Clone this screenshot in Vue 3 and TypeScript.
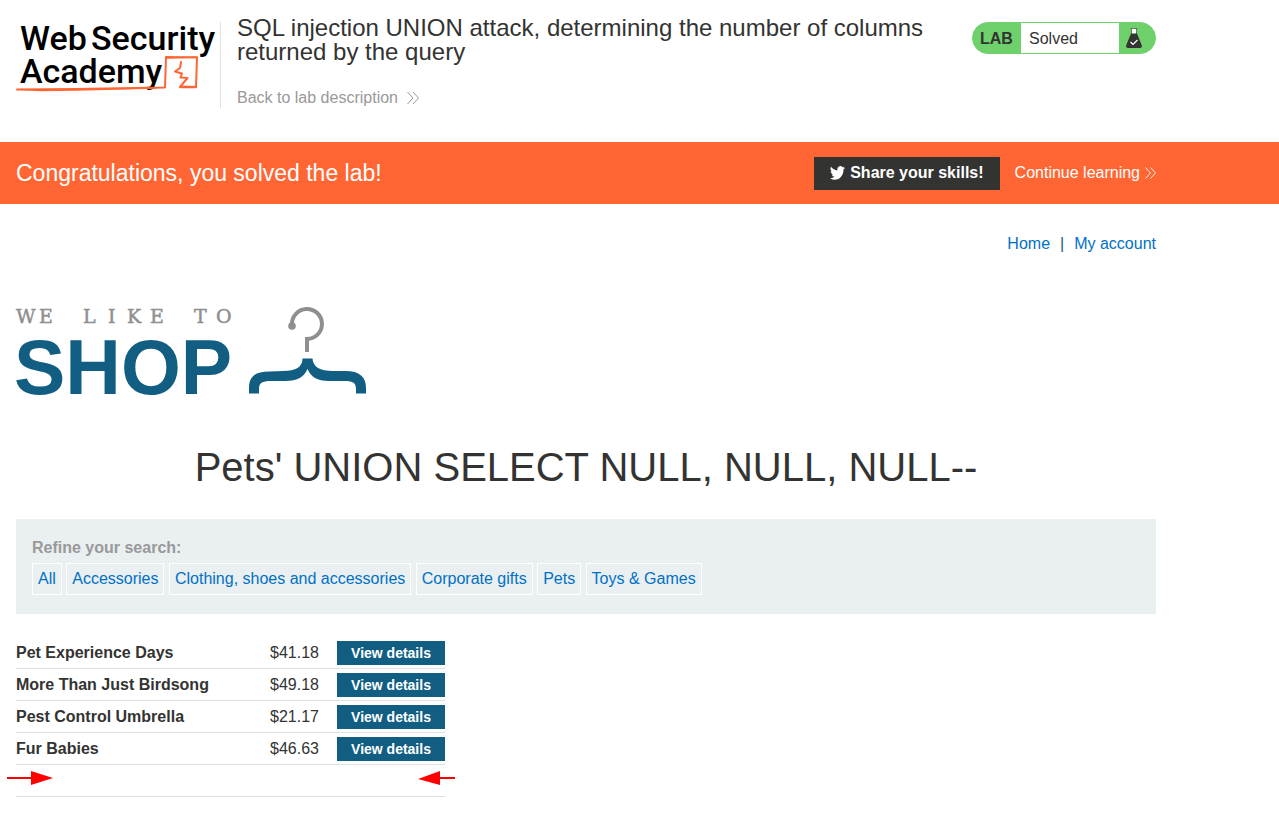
<script setup lang="ts">
interface Product {
  name: string
  price: string
}

const categories: string[] = [
  'All',
  'Accessories',
  'Clothing, shoes and accessories',
  'Corporate gifts',
  'Pets',
  'Toys & Games',
]

const products: Product[] = [
  { name: 'Pet Experience Days', price: '$41.18' },
  { name: 'More Than Just Birdsong', price: '$49.18' },
  { name: 'Pest Control Umbrella', price: '$21.17' },
  { name: 'Fur Babies', price: '$46.63' },
]
</script>

<template>
  <div class="page">
    <header class="container lab-header">
      <svg class="academy-logo" viewBox="0 0 200 72" width="200" height="72" role="img" aria-label="Web Security Academy">
        <g class="academy-text">
          <text x="4" y="28">Web</text>
          <text x="75" y="28">Security</text>
          <text x="4" y="61">Academy</text>
        </g>
        <g fill="none" stroke="#ff6633" stroke-linejoin="round" stroke-linecap="round">
          <path d="M1 67.500L60 67L149 65.500L150 35L181 35.500L180 65L165 64.500" stroke-width="2" />
          <path d="M5 67.500L25 68.500L60 68L140 66M150 36L181 35M180 65.500L164 65.500" stroke-width="1.500" />
          <path d="M165 40L164 46L159 49.500L166 51.500L164.500 55.500L171.500 56L164 65" stroke-width="2" />
        </g>
      </svg>
      <div class="title-block">
        <h2>SQL injection UNION attack, determining the number of columns returned by the query</h2>
        <a class="back-link" href="#">
          Back to lab description
          <svg width="12" height="12" viewBox="0 0 12 12" fill="none" stroke="currentColor" aria-hidden="true">
            <path d="M.5 0L6 6L.5 12M6 0L11.500 6L6 12" />
          </svg>
        </a>
      </div>
      <div class="status">
        <span class="status-tag">LAB</span>
        <span class="status-text">Solved</span>
        <span class="status-icon">
          <svg width="16" height="20" viewBox="0 0 16 20" aria-hidden="true">
            <path d="M5.500.5H10.500V6H5.500Z" fill="#fff" />
            <path d="M4.500.5H11.500M5.500 1V6M10.500 1V6" fill="none" stroke="#333332" stroke-width=".6" />
            <path d="M5 5.500H11L15.700 17Q16.500 20 14 20H2Q-.5 20 .3 17Z" fill="#333332" />
            <path d="M4.500 14L7 16.500L11.500 12" fill="none" stroke="#fff" stroke-width="1.200" />
          </svg>
        </span>
      </div>
    </header>

    <section class="banner">
      <div class="container banner-inner">
        <h3>Congratulations, you solved the lab!</h3>
        <button type="button" class="share">
          <svg width="15" height="14" viewBox="0 0 24 20" preserveAspectRatio="none" aria-hidden="true">
            <path d="M23.950 2.570a10 10 0 0 1-2.820.77 4.960 4.960 0 0 0 2.160-2.720c-.95.55-2 .95-3.130 1.190a4.920 4.920 0 0 0-8.380 4.480A13.980 13.980 0 0 1 1.640 1.160a4.920 4.920 0 0 0 1.520 6.570 4.900 4.900 0 0 1-2.230-.61v.06a4.920 4.920 0 0 0 3.950 4.830 5 5 0 0 1-2.210.08 4.940 4.940 0 0 0 4.600 3.420A9.870 9.870 0 0 1 0 17.540a13.990 13.990 0 0 0 7.560 2.210c9.050 0 14-7.500 14-13.980 0-.21 0-.42-.02-.63a9.940 9.940 0 0 0 2.410-2.570z" fill="#fff" />
          </svg>
          Share your skills!
        </button>
        <a class="continue" href="#">
          Continue learning
          <svg width="11" height="12" viewBox="0 0 12 12" fill="none" stroke="currentColor" aria-hidden="true">
            <path d="M.5 0L6 6L.5 12M6 0L11.500 6L6 12" />
          </svg>
        </a>
      </div>
    </section>

    <main class="container">
      <nav class="account-nav">
        <a href="#">Home</a>
        <span>|</span>
        <a href="#">My account</a>
      </nav>

      <svg class="shop-logo" viewBox="0 0 350 88" width="350" height="88" role="img" aria-label="We like to shop">
        <text class="tagline" y="16" x="0 23">WE</text>
        <text class="tagline" y="16" x="67 92 111 134">LIKE</text>
        <text class="tagline" y="16" x="178 200">TO</text>
        <text class="shop-word" x="-2" y="87">SHOP</text>
        <path d="M276 18A15 15 0 1 1 291 32V45" fill="none" stroke="#8f8f8f" stroke-width="4" />
        <circle cx="276" cy="19" r="3.800" fill="#8f8f8f" />
        <path d="M286.500 51.500H296.500C297 60 304 64 317 64H329C344 64 350 70 350 81V86.500H340V82C340 76 337 74 329 74H313C301 74 295 70 291.500 62C288 70 282 74 269 74L255 74C246 74 243 76 243 82V86.500H233V81C233 69 240 64.500 253 64.500L267 64C280 64 286.500 60 286.500 51.500Z" fill="#115e82" />
      </svg>

      <h1>Pets' UNION SELECT NULL, NULL, NULL--</h1>

      <section class="filters">
        <p>Refine your search:</p>
        <template v-for="category in categories" :key="category"><a href="#">{{ category }}</a>{{ ' ' }}</template>
      </section>

      <div class="results">
        <table>
          <tbody>
            <tr v-for="product in products" :key="product.name">
              <th scope="row">{{ product.name }}</th>
              <td class="price">{{ product.price }}</td>
              <td class="action"><a href="#">View details</a></td>
            </tr>
            <tr>
              <th></th>
              <td></td>
              <td></td>
            </tr>
          </tbody>
        </table>
        <svg class="arrow arrow-left" width="46" height="14" viewBox="0 0 46 14" aria-hidden="true">
          <path d="M0 6H24V0L46 7L24 14V8H0Z" fill="#f00" />
        </svg>
        <svg class="arrow arrow-right" width="37" height="14" viewBox="0 0 37 14" aria-hidden="true">
          <path d="M37 6H22V0L0 8L22 14V8H37Z" fill="#f00" />
        </svg>
      </div>
    </main>
  </div>
</template>

<style>
body {
  margin: 0;
  background: #fff;
}
</style>

<style scoped>
.page {
  color: #333332;
  font-family: "Liberation Sans", Arial, sans-serif;
  font-size: 16px;
  line-height: 20px;
}

.container {
  box-sizing: border-box;
  max-width: 1172px;
  padding: 0 16px;
}

a {
  color: #0071c5;
  text-decoration: none;
}

.lab-header {
  display: flex;
  align-items: flex-start;
  padding-top: 16px;
  padding-bottom: 34px;
}

.academy-logo {
  flex: none;
  margin: 6px 4px 0 0;
  overflow: visible;
}

.academy-text {
  font: 500 34px Roboto, sans-serif;
  fill: #000;
}

.title-block {
  position: relative;
  flex: 1;
  padding-left: 17px;
}

.title-block::before {
  content: "";
  position: absolute;
  left: 0;
  top: 6px;
  bottom: 0;
  border-left: 1px solid #e0e0e0;
}

h2 {
  margin: 0 0 24px;
  font-size: 24px;
  font-weight: 400;
  line-height: 24px;
}

.back-link {
  display: flex;
  align-items: center;
  gap: 9px;
  color: #999;
}

.status {
  display: flex;
  flex: none;
  box-sizing: border-box;
  width: 184px;
  height: 32px;
  margin-top: 6px;
  overflow: hidden;
  border: 1px solid #6fd16b;
  border-radius: 16px;
  background: #6fd16b;
  line-height: 32px;
}

.status-tag {
  width: 48px;
  padding-left: 7px;
  box-sizing: border-box;
  font-weight: 700;
}

.status-text {
  flex: 1;
  padding-left: 8px;
  background: #fff;
}

.status-icon {
  display: flex;
  width: 29px;
  margin-right: 7px;
  align-items: center;
  justify-content: center;
}

.banner {
  background: #ff6633;
  color: #fff;
}

.banner-inner {
  display: flex;
  align-items: center;
  height: 62px;
}

h3 {
  flex: 1;
  margin: 0;
  font-size: 23px;
  font-weight: 400;
  line-height: 28px;
}

.share {
  display: flex;
  align-items: center;
  gap: 5px;
  height: 33px;
  margin: 0 15px 0 0;
  padding: 0 16px;
  border: 0;
  background: #333332;
  color: #fff;
  font: inherit;
  font-weight: 700;
}

.continue {
  display: flex;
  align-items: center;
  gap: 5px;
  color: #fff;
}

.account-nav {
  display: flex;
  justify-content: flex-end;
  gap: 10px;
  padding: 30px 0 53px;
  color: #115e82;
}

.shop-logo {
  display: block;
  overflow: visible;
}

.tagline {
  font: 19px "DejaVu Serif", serif;
  fill: #8f8f8f;
  stroke: #8f8f8f;
  stroke-width: .5px;
}

.shop-word {
  font: 700 77px "Liberation Sans", Arial, sans-serif;
  fill: #115e82;
}

h1 {
  margin: 48px 0 28px;
  font-size: 40px;
  font-weight: 400;
  line-height: 48px;
  text-align: center;
}

.filters {
  padding: 19px 16px;
  background: #eaeff2;
}

.filters p {
  margin: 0 0 5px;
  color: #999;
  font-weight: 700;
}

.filters a {
  display: inline-block;
  padding: 5px;
  border: 1px solid #fff;
}

.results {
  position: relative;
  width: 429px;
  margin-top: 23px;
}

table {
  width: 100%;
  border-spacing: 0;
}

th,
td {
  box-sizing: border-box;
  height: 32px;
  padding: 0;
  border-bottom: 1px solid #e0e0e0;
  text-align: left;
}

.price {
  width: 67px;
}

.action {
  width: 108px;
}

.action a {
  display: block;
  background: #115e82;
  color: #fff;
  font-size: 14px;
  font-weight: 700;
  line-height: 24px;
  text-align: center;
}

.arrow {
  position: absolute;
  bottom: 12px;
}

.arrow-left {
  left: -9px;
}

.arrow-right {
  right: -10px;
}
</style>
